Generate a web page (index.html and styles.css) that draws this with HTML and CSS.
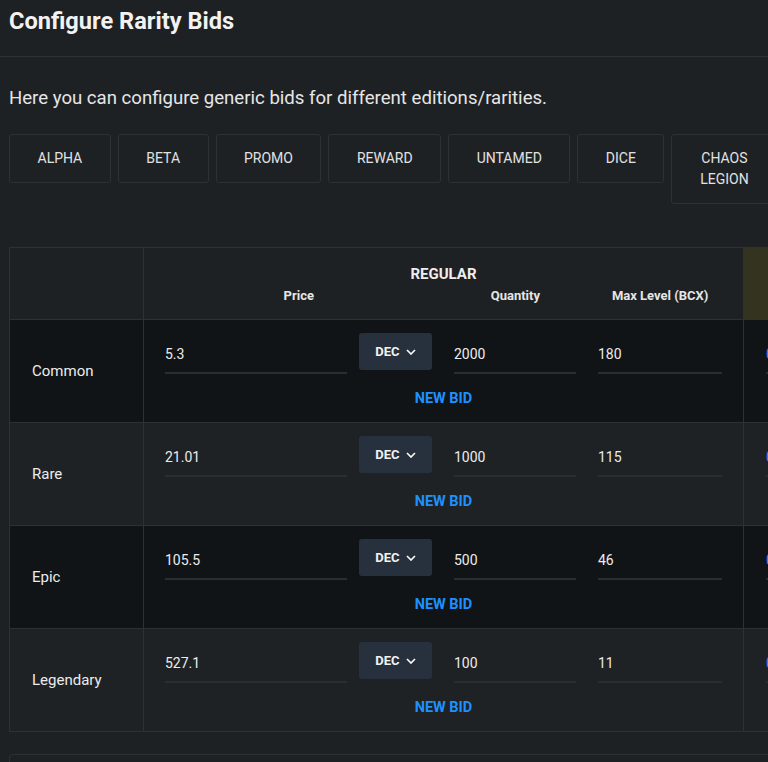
FILE: index.html
```html
<!DOCTYPE html>
<html>
<head>
<meta charset="utf-8">
<link rel="stylesheet" href="styles.css">
</head>
<body>
<header class="top">
  <h1 class="title">Configure Rarity Bids</h1>
</header>
<main class="content">
  <p class="intro">Here you can configure generic bids for different editions/rarities.</p>
  <div class="editions">
    <button class="ed">ALPHA</button>
    <button class="ed">BETA</button>
    <button class="ed">PROMO</button>
    <button class="ed">REWARD</button>
    <button class="ed">UNTAMED</button>
    <button class="ed">DICE</button>
    <button class="ed ed-wrap">CHAOS LEGION</button>
  </div>
  <table class="bids">
    <colgroup>
      <col class="c-label">
      <col class="c-group">
      <col class="c-next">
    </colgroup>
    <thead>
      <tr class="head-row">
        <th class="h-empty"></th>
        <th class="h-group">
          <div class="h-title">REGULAR</div>
          <div class="h-subs">
            <span class="s-price">Price</span>
            <span class="s-qty">Quantity</span>
            <span class="s-max">Max Level (BCX)</span>
          </div>
        </th>
        <th class="h-gold"></th>
      </tr>
    </thead>
    <tbody>
      <tr class="row dark">
        <td class="label">Common</td>
        <td class="group">
          <div class="inputs">
            <div class="field f-price">5.3</div>
            <div class="cur">DEC <svg class="chev" viewBox="0 0 10 6" width="10" height="6"><path d="M1 1l4 4 4-4" fill="none" stroke="#fff" stroke-width="1.6"/></svg></div>
            <div class="field f-qty">2000</div>
            <div class="field f-max">180</div>
          </div>
          <div class="newbid">NEW BID</div>
        </td>
        <td class="next"><div class="field f-next">0</div></td>
      </tr>
      <tr class="row light">
        <td class="label">Rare</td>
        <td class="group">
          <div class="inputs">
            <div class="field f-price">21.01</div>
            <div class="cur">DEC <svg class="chev" viewBox="0 0 10 6" width="10" height="6"><path d="M1 1l4 4 4-4" fill="none" stroke="#fff" stroke-width="1.6"/></svg></div>
            <div class="field f-qty">1000</div>
            <div class="field f-max">115</div>
          </div>
          <div class="newbid">NEW BID</div>
        </td>
        <td class="next"><div class="field f-next">0</div></td>
      </tr>
      <tr class="row dark">
        <td class="label">Epic</td>
        <td class="group">
          <div class="inputs">
            <div class="field f-price">105.5</div>
            <div class="cur">DEC <svg class="chev" viewBox="0 0 10 6" width="10" height="6"><path d="M1 1l4 4 4-4" fill="none" stroke="#fff" stroke-width="1.6"/></svg></div>
            <div class="field f-qty">500</div>
            <div class="field f-max">46</div>
          </div>
          <div class="newbid">NEW BID</div>
        </td>
        <td class="next"><div class="field f-next">0</div></td>
      </tr>
      <tr class="row light">
        <td class="label">Legendary</td>
        <td class="group">
          <div class="inputs">
            <div class="field f-price">527.1</div>
            <div class="cur">DEC <svg class="chev" viewBox="0 0 10 6" width="10" height="6"><path d="M1 1l4 4 4-4" fill="none" stroke="#fff" stroke-width="1.6"/></svg></div>
            <div class="field f-qty">100</div>
            <div class="field f-max">11</div>
          </div>
          <div class="newbid">NEW BID</div>
        </td>
        <td class="next"><div class="field f-next">0</div></td>
      </tr>
    </tbody>
  </table>
  <div class="panel"></div>
</main>
</body>
</html>
```

FILE: styles.css
```css
html, body {
  margin: 0;
  padding: 0;
  background: #1e2124;
  color: #e8e8e8;
  font-family: Roboto, "Liberation Sans", sans-serif;
  overflow: hidden;
}

.top {
  padding: 7px 9px 21px;
  border-bottom: 1px solid #2d3135;
}

.title {
  margin: 0;
  font-size: 23.6px;
  line-height: 28px;
  font-weight: 700;
  color: #f2f2f2;
}

.content {
  padding: 0 0 0 9px;
}

.intro {
  margin: 29px 0 24px;
  font-size: 18.6px;
  line-height: 24px;
  color: #e6e6e6;
}

.editions {
  display: flex;
  align-items: flex-start;
  gap: 7px;
  width: 830px;
  margin-bottom: 43px;
}

.ed {
  flex: none;
  background: transparent;
  border: 1px solid #2d3135;
  border-radius: 3px;
  color: #e2e2e2;
  font-family: Roboto, "Liberation Sans", sans-serif;
  font-size: 14px;
  line-height: 21px;
  padding: 13px 27.5px;
}

.ed-wrap {
  width: 106px;
  padding: 13px 4px;
}

.bids {
  border-collapse: collapse;
  table-layout: fixed;
  width: 934px;
}

.c-label { width: 134px; }
.c-group { width: 600px; }
.c-next { width: 200px; }

.bids th,
.bids td {
  border: 1px solid #2d3135;
  padding: 0;
  vertical-align: top;
}

.head-row {
  height: 72px;
}

.bids thead th {
  background: #1e2124;
}

.bids thead th.h-gold {
  background: #33331f;
}

.h-group {
  text-align: center;
}

.h-title {
  padding-top: 16px;
  font-size: 15px;
  line-height: 20px;
  font-weight: 700;
  color: #eeeeee;
}

.h-subs {
  display: flex;
  margin-top: 4px;
  font-size: 13px;
  line-height: 16px;
  font-weight: 700;
  color: #e6e6e6;
}

.s-price { width: 310px; }
.s-qty { width: 124px; }
.s-max { width: 166px; }

.row {
  height: 103px;
}

.row.dark td { background: #111416; }
.row.light td { background: #1e2225; }

.bids td.label {
  vertical-align: middle;
  padding-left: 22px;
  font-size: 15px;
  color: #ececec;
}

.bids td.group {
  padding: 13px 21px 0;
}

.inputs {
  display: flex;
  align-items: flex-start;
}

.field {
  box-sizing: border-box;
  height: 41px;
  padding-top: 10px;
  font-size: 14px;
  line-height: 22px;
  color: #ececec;
  border-bottom: 2px solid #2a2e32;
}

.f-price { width: 182px; }
.f-qty { width: 122px; margin-left: 22px; }
.f-max { width: 124px; margin-left: 22px; }

.cur {
  box-sizing: border-box;
  width: 73px;
  height: 37px;
  margin-left: 12px;
  background: #27313d;
  border-radius: 3px;
  display: flex;
  align-items: center;
  justify-content: center;
  gap: 6px;
  font-size: 13px;
  font-weight: 700;
  color: #f2f2f2;
}

.chev {
  display: block;
  margin-top: 1px;
}

.newbid {
  margin-top: 15px;
  text-align: center;
  font-size: 14.5px;
  line-height: 20px;
  font-weight: 700;
  color: #1e90ff;
}

.bids td.next {
  padding: 13px 0 0 22px;
}

.f-next {
  width: 120px;
  color: #2196f3;
}

.panel {
  margin-top: 22px;
  height: 60px;
  border: 1px solid #2d3135;
  border-radius: 4px;
  width: 900px;
}
```
